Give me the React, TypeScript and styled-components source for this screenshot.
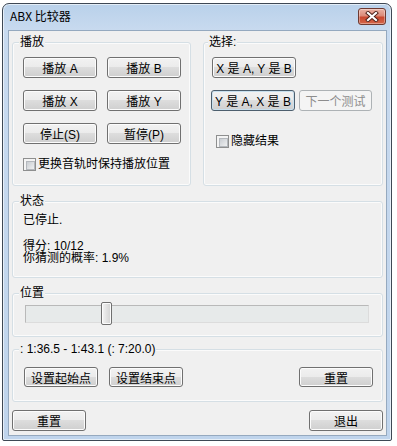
import React from "react";
import styled, { createGlobalStyle } from "styled-components";

const Global = createGlobalStyle`
  html, body { margin: 0; padding: 0; background: #ffffff; }
  body { font: 12px "Liberation Sans", "Noto Sans CJK SC", sans-serif; color: #000; }
  * { box-sizing: border-box; }
`;

const Window = styled.div`
  margin: 3px 0 0 2px;
  width: 390px;
  height: 438px;
  border: 1px solid #3e4854;
  border-radius: 7px 7px 2px 2px;
  background: linear-gradient(#b9d1ea 0px, #c8daef 26px, #bfd4ec 100%);
  box-shadow: inset 0 0 0 1px rgba(255, 255, 255, 0.6);
  display: flex;
  flex-direction: column;
`;

const TitleBar = styled.div`
  height: 26px;
  display: flex;
  align-items: flex-start;
  justify-content: space-between;
  padding: 0 5px 0 7px;
`;

const Title = styled.span`
  margin-top: 5px;
  line-height: 14px;
  font-size: 12px;
  font-family: "Noto Sans CJK SC", "Liberation Sans", sans-serif;
  color: #000;
`;

const CloseButton = styled.div`
  margin-top: 4px;
  width: 28px;
  height: 17px;
  border: 1px solid #6e3a31;
  border-radius: 3px;
  background: linear-gradient(#eab2a4 0%, #db8a78 45%, #c9482f 55%, #d4664a 100%);
  box-shadow: inset 0 0 0 1px rgba(255, 255, 255, 0.35);
  display: flex;
  align-items: center;
  justify-content: center;
`;

const Client = styled.div`
  margin: 0 4px 0 5px;
  width: 379px;
  height: 406px;
  border: 1px solid #95a9bf;
  background: #f0f0f0;
  padding: 11px 3px 0 3px;
  display: flex;
  flex-direction: column;
`;

const TopRow = styled.div`
  display: grid;
  grid-template-columns: 179px 180px;
  column-gap: 12px;
`;

const Group = styled.div<{ $h: number; $mt?: number; $pl: number; $pr?: number }>`
  height: ${(p) => p.$h}px;
  margin-top: ${(p) => p.$mt ?? 0}px;
  border: 1px solid #d5dfe5;
  border-radius: 3px;
  box-shadow: inset 0 0 0 1px #fbfbfb;
  padding: 0 ${(p) => p.$pr ?? 8}px 0 ${(p) => p.$pl}px;
  display: flex;
  flex-direction: column;
  align-items: flex-start;
`;

const Legend = styled.span<{ $ml: number }>`
  margin: -7px 0 0 ${(p) => p.$ml}px;
  padding: 0 1px;
  height: 12px;
  line-height: 12px;
  background: #f0f0f0;
  white-space: nowrap;
`;

const ButtonGrid = styled.div`
  margin-top: 9px;
  display: grid;
  grid-template-columns: 74px 74px;
  grid-auto-rows: 21px;
  column-gap: 10px;
  row-gap: 12px;
`;

const Button = styled.button<{ $w?: number; $h?: number; $default?: boolean }>`
  width: ${(p) => p.$w ?? 74}px;
  height: ${(p) => p.$h ?? 21}px;
  margin: 0;
  padding: 0;
  font: 12px "Liberation Sans", "Noto Sans CJK SC", sans-serif;
  color: #000;
  border: 1px solid ${(p) => (p.$default ? "#4d5f6e" : "#707070")};
  border-radius: 3px;
  background: linear-gradient(#f2f2f2 0%, #ebebeb 50%, #dddddd 50%, #cfcfcf 100%);
  box-shadow: inset 0 0 0 1px ${(p) => (p.$default ? "#c9e0ee" : "#fcfcfc")};
  display: flex;
  align-items: center;
  justify-content: center;
  white-space: nowrap;
  &:disabled {
    color: #8d8d8d;
    border-color: #adb2b5;
    background: #f4f4f4;
    box-shadow: none;
  }
`;

const CheckRow = styled.label<{ $mt: number; $ml?: number }>`
  margin-top: ${(p) => p.$mt}px;
  margin-left: ${(p) => p.$ml ?? 0}px;
  display: flex;
  align-items: center;
  gap: 2px;
  line-height: 13px;
`;

const CheckBox = styled.span`
  width: 13px;
  height: 13px;
  border: 1px solid #8e8f8f;
  background: #f4f4f4;
  padding: 2px;
  display: block;
  &::after {
    content: "";
    display: block;
    width: 100%;
    height: 100%;
    border: 1px solid #b4b8bd;
    background: linear-gradient(135deg, #c9cdd2, #eff0f1);
  }
`;

const SelectRow = styled.div<{ $mt: number; $ml?: number }>`
  margin-top: ${(p) => p.$mt}px;
  margin-left: ${(p) => p.$ml ?? 0}px;
  display: flex;
  gap: 4px;
`;

const StatusText = styled.div<{ $mt: number }>`
  margin-top: ${(p) => p.$mt}px;
  line-height: 12px;
  white-space: pre;
`;

const Track = styled.div`
  position: relative;
  margin-top: 6px;
  width: 344px;
  height: 18px;
  border: 1px solid #b9b9b9;
  border-bottom-color: #dcdcdc;
  border-right-color: #dcdcdc;
  background: #e7eaea;
`;

const Thumb = styled.div`
  position: absolute;
  top: -4px;
  width: 11px;
  height: 23px;
  border: 1px solid #707070;
  border-radius: 2px;
  background: linear-gradient(90deg, #f5f5f5, #e2e2e2 50%, #d3d3d3);
  box-shadow: inset 0 0 0 1px #fbfbfb;
`;

const RangeButtons = styled.div`
  margin-top: 12px;
  width: 100%;
  display: flex;
  gap: 11px;
`;

const Spacer = styled.div`
  flex: 1;
`;

const BottomRow = styled.div`
  margin-top: 8px;
  display: flex;
  justify-content: space-between;
`;

export default function App() {
  const pos = 0.22;
  return (
    <>
      <Global />
      <Window>
        <TitleBar>
          <Title>ABX 比较器</Title>
          <CloseButton>
            <svg width="14" height="11" viewBox="0 0 14 11">
              <path d="M3 2 L11 9 M11 2 L3 9" stroke="#4b1f18" strokeWidth="4" strokeLinecap="square" />
              <path d="M3 2 L11 9 M11 2 L3 9" stroke="#ffffff" strokeWidth="2.2" strokeLinecap="square" />
            </svg>
          </CloseButton>
        </TitleBar>
        <Client>
          <TopRow>
            <Group $h={144} $pl={10}>
              <Legend $ml={-4}>播放</Legend>
              <ButtonGrid>
                <Button>播放 A</Button>
                <Button>播放 B</Button>
                <Button>播放 X</Button>
                <Button>播放 Y</Button>
                <Button>停止(S)</Button>
                <Button>暂停(P)</Button>
              </ButtonGrid>
              <CheckRow $mt={14}>
                <CheckBox />
                <span>更换音轨时保持播放位置</span>
              </CheckRow>
            </Group>
            <Group $h={144} $pl={8}>
              <Legend $ml={-4}>选择:</Legend>
              <SelectRow $mt={9}>
                <Button $w={84}>X 是 A, Y 是 B</Button>
              </SelectRow>
              <SelectRow $mt={12} $ml={-1}>
                <Button $w={84} $default>Y 是 A, X 是 B</Button>
                <Button $w={73} disabled>下一个测试</Button>
              </SelectRow>
              <CheckRow $mt={24} $ml={4}>
                <CheckBox />
                <span>隐藏结果</span>
              </CheckRow>
            </Group>
          </TopRow>
          <Group $h={77} $mt={15} $pl={10}>
            <Legend $ml={-4}>状态</Legend>
            <StatusText $mt={7}>已停止.</StatusText>
            <StatusText $mt={14}>{"得分: 10/12\n你猜测的概率: 1.9%"}</StatusText>
          </Group>
          <Group $h={44} $mt={15} $pl={12}>
            <Legend $ml={-6}>位置</Legend>
            <Track>
              <Thumb style={{ left: `${Math.round(pos * 344) - 1}px` }} />
            </Track>
          </Group>
          <Group $h={53} $mt={12} $pl={11} $pr={9}>
            <Legend $ml={-5}>: 1:36.5 - 1:43.1 (: 7:20.0)</Legend>
            <RangeButtons>
              <Button $h={20}>设置起始点</Button>
              <Button $h={20}>设置结束点</Button>
              <Spacer />
              <Button $h={20}>重置</Button>
            </RangeButtons>
          </Group>
          <BottomRow>
            <Button>重置</Button>
            <Button>退出</Button>
          </BottomRow>
        </Client>
      </Window>
    </>
  );
}
